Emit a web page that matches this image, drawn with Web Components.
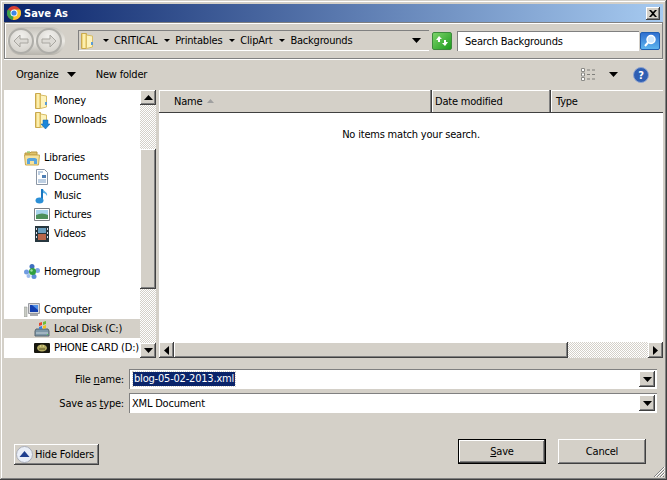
<!DOCTYPE html>
<html>
<head>
<meta charset="utf-8">
<title>Save As</title>
<style>
  html, body { margin: 0; background: #d4d0c8; }
  body { font: 11px 'DejaVu Sans', sans-serif; font-stretch: condensed; letter-spacing: -0.2px; color: #000; }
</style>
</head>
<body>
<dialog-window>
  <title-bar>Save As</title-bar>
  <nav-bar></nav-bar>
  <tool-bar></tool-bar>
  <div style="display:flex;height:268px">
    <nav-tree>
      <tree-item child icon="money">Money</tree-item>
      <tree-item child icon="downloads">Downloads</tree-item>
      <tree-item></tree-item>
      <tree-item icon="libraries">Libraries</tree-item>
      <tree-item child icon="documents">Documents</tree-item>
      <tree-item child icon="music">Music</tree-item>
      <tree-item child icon="pictures">Pictures</tree-item>
      <tree-item child icon="videos">Videos</tree-item>
      <tree-item></tree-item>
      <tree-item icon="homegroup">Homegroup</tree-item>
      <tree-item></tree-item>
      <tree-item icon="computer">Computer</tree-item>
      <tree-item child selected icon="disk">Local Disk (C:)</tree-item>
      <tree-item child icon="card">PHONE CARD (D:)</tree-item>
    </nav-tree>
    <file-list></file-list>
  </div>
  <div style="padding-top:11px;display:grid;gap:4px">
    <file-field label="File name:" key="n" selected>blog-05-02-2013.xml</file-field>
    <file-field label="Save as type:" key="t">XML Document</file-field>
  </div>
  <dialog-footer></dialog-footer>
</dialog-window>

<script>
const FOLDER = `<path d="M1.500 1.500h5v15h-5z" fill="#f0d67e" stroke="#c9a94f"/><path d="M6.500 3l6 1v11l-6 1.500z" fill="#fdf3bd" stroke="#d8bd66"/><path d="M3 2h2v14H3z" fill="#fbeeae"/>`

const ICONS = {
  folder: `<svg width="16" height="18" viewBox="0 0 16 18">${FOLDER}<path d="M11 10h2v3h-2z" fill="#5b9bd5"/></svg>`,
  money: `<svg width="16" height="18" viewBox="0 0 16 18">${FOLDER}<path d="M11 10h2v3h-2z" fill="#5b9bd5"/></svg>`,
  downloads: `<svg width="16" height="18" viewBox="0 0 16 18">${FOLDER}<path d="M9 9h5v4h2l-4.500 5-4.500-5h2z" fill="#1c86d8" stroke="#0d5fa8" stroke-width=".5"/></svg>`,
  libraries: `<svg width="16" height="16" viewBox="0 0 16 16"><path d="M1 3h5l1-1h6v3H1z" fill="#e0c26a" stroke="#b8963f"/><path d="M.5 5h15l-1 10H1.500z" fill="#f7e39d" stroke="#c9a94f"/><path d="M3 14V9l2-1h6l2 1v5h-3v-3H6v3z" fill="#5aa5de"/><path d="M3 2h3" stroke="#6cc04a"/></svg>`,
  documents: `<svg width="14" height="16" viewBox="0 0 14 16"><path d="M1.500.5h8l3 3v12h-11z" fill="#fff" stroke="#8b96a5"/><path d="M3 3h5M3 5h2M3 11h8M3 13h8" stroke="#7d9fc6"/><path d="M7 6h4v3H7z" fill="#4f7fb5"/></svg>`,
  music: `<svg width="14" height="16" viewBox="0 0 14 16"><path d="M7 1v11" stroke="#1a76bf" stroke-width="2"/><path d="M8 1c1 3 5 3 4 7-1-2-2-3-4-3z" fill="#57aee6"/><ellipse cx="4.500" cy="12.500" rx="4" ry="3" fill="#2b8fd6"/></svg>`,
  pictures: `<svg width="16" height="13" viewBox="0 0 16 13"><path d="M.5.5h15v12H.5z" fill="#fff" stroke="#7b7f85"/><path d="M2 2h12v5H2z" fill="#a8d4ec"/><path d="M2 7c4-2 8-2 12 0v4H2z" fill="#4c8f5a"/></svg>`,
  videos: `<svg width="14" height="16" viewBox="0 0 14 16"><path d="M0 0h14v16H0z" fill="#27373f"/><path d="M3 2h8v5H3z" fill="#6a9fc0"/><path d="M3 8h8v6H3z" fill="#b8664a"/><path d="M1 2h1v2H1zM1 6h1v2H1zM1 10h1v2H1zM12 2h1v2h-1zM12 6h1v2h-1zM12 10h1v2h-1z" fill="#dde"/></svg>`,
  homegroup: `<svg width="16" height="15" viewBox="0 0 16 15"><circle cx="2.500" cy="8" r="2.500" fill="#6f9be0"/><circle cx="8" cy="2.500" r="2.500" fill="#3e6fc0"/><circle cx="13.500" cy="6.500" r="2.500" fill="#7ea6e6"/><circle cx="10" cy="12.500" r="2.500" fill="#5f8fd8"/><circle cx="4.500" cy="12" r="2" fill="#9dbcec"/><circle cx="8.500" cy="7.500" r="3.500" fill="#2f9f3f"/><circle cx="7.500" cy="6.500" r="1.200" fill="#9fe39f"/></svg>`,
  computer: `<svg width="16" height="14" viewBox="0 0 16 14"><path d="M0 4h3v10H0z" fill="#c9ccc5" stroke="#8a8d88" stroke-width=".5"/><path d="M4.500.5h11v10h-11z" fill="#d8dadf" stroke="#9a9ca2"/><path d="M6 2h8v7H6z" fill="#123fb0"/><path d="M8 2h6v5z" fill="#4f8fe8"/><path d="M6 11h8v2H6z" fill="#a8aaae"/></svg>`,
  disk: `<svg width="16" height="16" viewBox="0 0 16 16"><path d="M1 10l1-2h12l1 2v5H1z" fill="#7d97a8" stroke="#56656f"/><path d="M2 12h12" stroke="#c7d3da"/><path d="M13 13h1v1h-1z" fill="#4fd04f"/><path d="M5 2l3-1v3l-3 1z" fill="#e5482c"/><path d="M9 1l3-1v3L9 4z" fill="#6dbb37"/><path d="M5 6l3-1v3H5z" fill="#3c80d8"/><path d="M9 5l3-1v3L9 8z" fill="#f2c01f"/></svg>`,
  card: `<svg width="16" height="10" viewBox="0 0 16 10"><path d="M0 1q0-1 1-1h14q1 0 1 1v8q0 1-1 1H1q-1 0-1-1z" fill="#17170f"/><ellipse cx="8" cy="5" rx="5" ry="3.500" fill="#b3ab61"/><path d="M5 6h6" stroke="#5b5628"/><path d="M6 3h1M9 3h1" stroke="#eee8a8"/></svg>`
}

const RAISED = `box-shadow: inset -1px -1px #404040, inset 1px 1px #fff, inset -2px -2px #808080;`

function arrow (dir) {
  const d = { up: 'M0 5L4.500 0 9 5z', down: 'M0 0h9L4.500 5z', left: 'M5 0v9L0 4.500z', right: 'M0 0v9l5-4.500z' }[dir]
  const w = dir === 'up' || dir === 'down' ? 9 : 5
  const h = w === 9 ? 5 : 9
  return `<svg width="${w}" height="${h}" viewBox="0 0 ${w} ${h}"><path d="${d}"/></svg>`
}

function arrowSmall () {
  return `<svg width="6" height="3" viewBox="0 0 6 3"><path d="M0 0h6L3 3z"/></svg>`
}

class DialogWindow extends HTMLElement {
  constructor () {
    super()
    this.attachShadow({ mode: 'open' }).innerHTML = `
    <style>
      :host {
        display: block; box-sizing: border-box; width: 667px; height: 480px;
        padding: 4px 4px 0; background: #d4d0c8; position: relative; overflow: hidden;
        box-shadow: inset -1px -1px #404040, inset 1px 1px #d4d0c8, inset -2px -2px #808080, inset 2px 2px #fff;
      }
    </style>
    <slot></slot>`
  }
}

class TitleBar extends HTMLElement {
  constructor () {
    super()
    this.attachShadow({ mode: 'open' }).innerHTML = `
    <style>
      :host {
        display: flex; align-items: center; height: 18px; color: #fff; font-weight: bold; letter-spacing: 0;
        background: linear-gradient(90deg, #0a246a, #a6caf0);
      }
      svg.logo { margin: 0 3px 0 3px; flex: none; }
      .text { flex: 1; }
      .close {
        width: 14px; height: 13px; margin-right: 3px; background: #d4d0c8; display: flex;
        align-items: center; justify-content: center; ${RAISED}
      }
    </style>
    <svg class="logo" width="14" height="14" viewBox="0 0 14 14">
      <circle cx="7" cy="7" r="7" fill="#d93f32"/>
      <path d="M7 7L.9 3.500A7 7 0 0 0 6 13.900z" fill="#3aa14a"/>
      <path d="M7 3.500h6.100A7 7 0 0 1 6 13.900L7 7z" fill="#f6c52c"/>
      <circle cx="7" cy="7" r="3.500" fill="#fff"/><circle cx="7" cy="7" r="2.600" fill="#3e86e6"/>
    </svg>
    <span class="text"><slot></slot></span>
    <div class="close"><svg width="8" height="7" viewBox="0 0 8 7"><path d="M0 0h2l2 2 2-2h2L5 3.500 8 7H6L4 5 2 7H0l3-3.500z"/></svg></div>`
  }
}

class NavBar extends HTMLElement {
  constructor () {
    super()
    const crumbs = ['CRITICAL', 'Printables', 'ClipArt', 'Backgrounds']
      .map(c => `<span class="crumb">${arrowSmall()}<span>${c}</span></span>`).join('')
    this.attachShadow({ mode: 'open' }).innerHTML = `
    <style>
      :host {
        display: flex; align-items: center; box-sizing: border-box; height: 37px;
        border: 1px solid #808080;
        box-shadow: inset 1px 1px #fff, 0 1px #fff; padding: 0 2px 0 2px;
      }
      .nav { display: flex; width: 58px; height: 28px; margin-right: 13px; border-radius: 14px; background: linear-gradient(#c6c3bb, #eceae5 50%, #b7b4ac); flex: none; }
      .round { width: 26px; height: 26px; margin: 1px; border-radius: 50%; box-sizing: border-box; border: 2px solid #aeada8; background: radial-gradient(circle at 50% 30%, #f2f1ee, #cfccc5); display: flex; align-items: center; justify-content: center; }
      .bread {
        width: 351px; height: 21px; box-sizing: border-box; background: #d4d0c8; display: flex; align-items: center; flex: none;
        border-top: 1px solid #808080; border-left: 1px solid #808080; border-bottom: 1px solid #fff;
      }
      .bread .fld { margin: 0 0 0 1px; flex: none; display: flex; }
      .crumb { display: inline-flex; align-items: center; gap: 5px; margin-left: 7px; }
      .drop { margin-left: auto; margin-right: 8px; display: flex; }
      .refresh { width: 20px; height: 18px; margin: 0 5px 0 3px; box-sizing: border-box; border: 1px solid #3d8a3d; border-radius: 2px; background: linear-gradient(135deg, #7cd36a, #1d9b1d); display: flex; align-items: center; justify-content: center; flex: none; }
      .search { width: 182px; height: 20px; box-sizing: border-box; background: #fff; border-top: 1px solid #808080; border-left: 1px solid #808080; padding: 1px 0 0 7px; line-height: 17px; flex: none; }
      .go { width: 20px; height: 18px; margin-left: 1px; box-sizing: border-box; border: 1px solid #1f5fb2; border-radius: 2px; background: linear-gradient(#2f6fd0, #5db4ee); display: flex; align-items: center; justify-content: center; flex: none; }
    </style>
    <div class="nav">
      <div class="round"><svg width="16" height="14" viewBox="0 0 16 14"><path d="M7 1L1 7l6 6V9h8V5H7z" fill="#dcdad5" stroke="#a8a6a0"/></svg></div>
      <div class="round"><svg width="16" height="14" viewBox="0 0 16 14"><path d="M9 1l6 6-6 6V9H1V5h8z" fill="#dcdad5" stroke="#a8a6a0"/></svg></div>
    </div>
    <div class="bread">
      <span class="fld">${ICONS.folder}</span>
      ${crumbs}
      <span class="drop">${arrow('down')}</span>
    </div>
    <div class="refresh"><svg width="14" height="12" viewBox="0 0 14 12"><path d="M1 5l3-4 3 3H5v3H3V5zM13 7l-3 4-3-3h2V5h2v2z" fill="#fff"/></svg></div>
    <div class="search">Search Backgrounds</div>
    <div class="go"><svg width="14" height="14" viewBox="0 0 14 14"><circle cx="8" cy="5.500" r="4" fill="#cfe6fb" stroke="#fff" stroke-width="1.500"/><path d="M5 8.500L2 12" stroke="#fff" stroke-width="2"/></svg></div>`
  }
}

class ToolBar extends HTMLElement {
  constructor () {
    super()
    this.attachShadow({ mode: 'open' }).innerHTML = `
    <style>
      :host { display: flex; align-items: center; height: 31px; padding: 0 14px 0 12px; }
      .org { display: inline-flex; align-items: center; gap: 8px; }
      .new { margin-left: 20px; }
      .right { margin-left: auto; display: flex; align-items: center; }
      .right svg.arr { margin: 0 15px 0 13px; }
    </style>
    <span class="org">Organize ${arrow('down')}</span>
    <span class="new">New folder</span>
    <span class="right">
      <svg width="15" height="13" viewBox="0 0 15 13"><path d="M.5.500h3v3h-3zM.5 5h3v3h-3zM.5 9.500h3v3h-3z" fill="#fff" stroke="#8a8a86"/><path d="M6 2h3M11 2h3M6 6.500h3M11 6.500h3M6 11h3M11 11h3" stroke="#7e7e7a"/></svg>
      <svg class="arr" width="9" height="5" viewBox="0 0 9 5"><path d="M0 0h9L4.500 5z"/></svg>
      <svg width="16" height="16" viewBox="0 0 16 16"><circle cx="8" cy="8" r="7.500" fill="#2f5fb3" stroke="#8fa4cf"/><text x="8" y="12" text-anchor="middle" font-family="'DejaVu Sans'" font-weight="bold" font-size="11" fill="#fff">?</text></svg>
    </span>`
  }
}

class NavTree extends HTMLElement {
  constructor () {
    super()
    this.attachShadow({ mode: 'open' }).innerHTML = `
    <style>
      :host { display: flex; width: 152px; flex: none; }
      .pane { width: 136px; background: #fff; padding-top: 1px; overflow: hidden; box-sizing: border-box; }
    </style>
    <div class="pane"><slot></slot></div>
    <scroll-bar vertical></scroll-bar>`
  }
}

class TreeItem extends HTMLElement {
  constructor () {
    super()
    const icon = ICONS[this.getAttribute('icon')] || ''
    this.attachShadow({ mode: 'open' }).innerHTML = `
    <style>
      :host { display: flex; align-items: center; height: 19px; padding-left: 20px; white-space: nowrap; }
      :host([child]) { padding-left: 30px; }
      :host([selected]) { background: #d4d0c8; }
      .icon { width: 16px; margin-right: 4px; display: flex; justify-content: center; flex: none; }
    </style>
    <span class="icon">${icon}</span><span><slot></slot></span>`
  }
}

class ScrollBar extends HTMLElement {
  constructor () {
    super()
    const v = this.hasAttribute('vertical')
    this.attachShadow({ mode: 'open' }).innerHTML = `
    <style>
      :host { display: flex; flex: none; ${v ? 'flex-direction: column; width: 16px;' : 'height: 16px;'} }
      .btn { flex: none; ${v ? 'height: 15px;' : 'width: 15px;'} background: #d4d0c8; display: flex; align-items: center; justify-content: center; ${RAISED} }
      .track { background: repeating-conic-gradient(#fff 0 25%, #d4d0c8 0 50%) 0 0/2px 2px; }
      .thumb { background: #d4d0c8; ${RAISED} }
    </style>
    ${v ? `
    <div class="btn">${arrow('up')}</div>
    <div class="track" style="height:44px"></div>
    <div class="thumb" style="height:140px"></div>
    <div class="track" style="flex:1"></div>
    <div class="btn">${arrow('down')}</div>` : `
    <div class="btn">${arrow('left')}</div>
    <div class="thumb" style="width:394px"></div>
    <div class="track" style="flex:1"></div>
    <div class="btn">${arrow('right')}</div>`}`
  }
}

class FileList extends HTMLElement {
  constructor () {
    super()
    this.attachShadow({ mode: 'open' }).innerHTML = `
    <style>
      :host { display: flex; flex-direction: column; flex: 1; margin-left: 3px; min-width: 0; }
      .head { display: flex; height: 23px; flex: none; border-bottom: 1px solid #404040; box-sizing: border-box; box-shadow: inset 0 1px #fff; }
      .col { box-sizing: border-box; padding: 3px 0 0 3px; line-height: 18px; box-shadow: inset -1px 0 #404040, inset -2px 0 #808080, inset 1px 0 #fff; }
      .sort { margin-left: 2px; vertical-align: 2px; }
      .body { flex: 1; background: #fff; text-align: center; padding-top: 15px; line-height: 14px; }
    </style>
    <div class="head">
      <div class="col" style="width:273px;padding-left:15px">Name <svg class="sort" width="7" height="4" viewBox="0 0 7 4"><path d="M0 4L3.500 0 7 4z" fill="#a0a0a0"/></svg></div>
      <div class="col" style="width:119px">Date modified</div>
      <div class="col" style="flex:1;padding-left:5px;box-shadow:inset 1px 0 #fff">Type</div>
    </div>
    <div class="body">No items match your search.</div>
    <scroll-bar></scroll-bar>`
  }
}

class FileField extends HTMLElement {
  constructor () {
    super()
    const label = this.getAttribute('label')
    const key = this.getAttribute('key')
    const html = label.replace(key, `<u>${key}</u>`)
    this.attachShadow({ mode: 'open' }).innerHTML = `
    <style>
      :host { display: flex; align-items: center; height: 20px; }
      .label { width: 120px; text-align: right; margin-right: 5px; flex: none; }
      .box { width: 528px; height: 20px; box-sizing: border-box; background: #fff; display: flex; align-items: center; justify-content: space-between; padding: 0 1px 0 3px; box-shadow: inset 1px 1px #808080, inset -1px -1px #fff; flex: none; }
      .sel { background: #0a246a; color: #fff; outline: 1px dotted #d4d0c8; padding: 0 1px; margin-left: 1px; line-height: 14px; }
      .btn { width: 16px; height: 16px; margin-right: 1px; background: #d4d0c8; display: flex; align-items: center; justify-content: center; ${RAISED} }
    </style>
    <span class="label">${html}</span>
    <div class="box">
      ${this.hasAttribute('selected') ? '<span class="sel"><slot></slot></span>' : '<span><slot></slot></span>'}
      <span class="btn">${arrow('down')}</span>
    </div>`
  }
}

class DialogFooter extends HTMLElement {
  constructor () {
    super()
    this.attachShadow({ mode: 'open' }).innerHTML = `
    <style>
      :host { display: flex; align-items: flex-start; padding: 26px 17px 0 10px; }
      .hide { display: flex; align-items: center; width: 85px; height: 21px; margin-top: 5px; box-sizing: border-box; padding-left: 2px; gap: 2px; ${RAISED} }
      .hide svg { flex: none; }
      .btn { width: 88px; height: 25px; box-sizing: border-box; display: flex; align-items: center; justify-content: center; ${RAISED} }
      .save { margin-left: auto; margin-right: 12px; outline: 1px solid #000; outline-offset: -1px; box-shadow: inset -2px -2px #404040, inset 2px 2px #fff, inset -3px -3px #808080; }
      .grip { position: absolute; right: 2px; bottom: 2px; }
    </style>
    <div class="hide">
      <svg width="17" height="17" viewBox="0 0 17 17"><circle cx="8.500" cy="8.500" r="8" fill="#e9eef7" stroke="#a9adb8"/><path d="M3.500 11L8.500 5l5 6z" fill="#1f3f8f"/></svg>
      Hide Folders
    </div>
    <div class="btn save"><span><u>S</u>ave</span></div>
    <div class="btn">Cancel</div>
    <svg class="grip" width="12" height="12" viewBox="0 0 12 12"><path d="M11 1L1 11M11 4l-7 7M11 7l-4 4M11 10l-1 1" stroke="#808080" fill="none"/><path d="M12 1L2 11M12 4l-7 7M12 7l-4 4" stroke="#fff" fill="none"/></svg>`
  }
}

customElements.define('dialog-window', DialogWindow)
customElements.define('title-bar', TitleBar)
customElements.define('nav-bar', NavBar)
customElements.define('tool-bar', ToolBar)
customElements.define('nav-tree', NavTree)
customElements.define('tree-item', TreeItem)
customElements.define('scroll-bar', ScrollBar)
customElements.define('file-list', FileList)
customElements.define('file-field', FileField)
customElements.define('dialog-footer', DialogFooter)
</script>
</body>
</html>
